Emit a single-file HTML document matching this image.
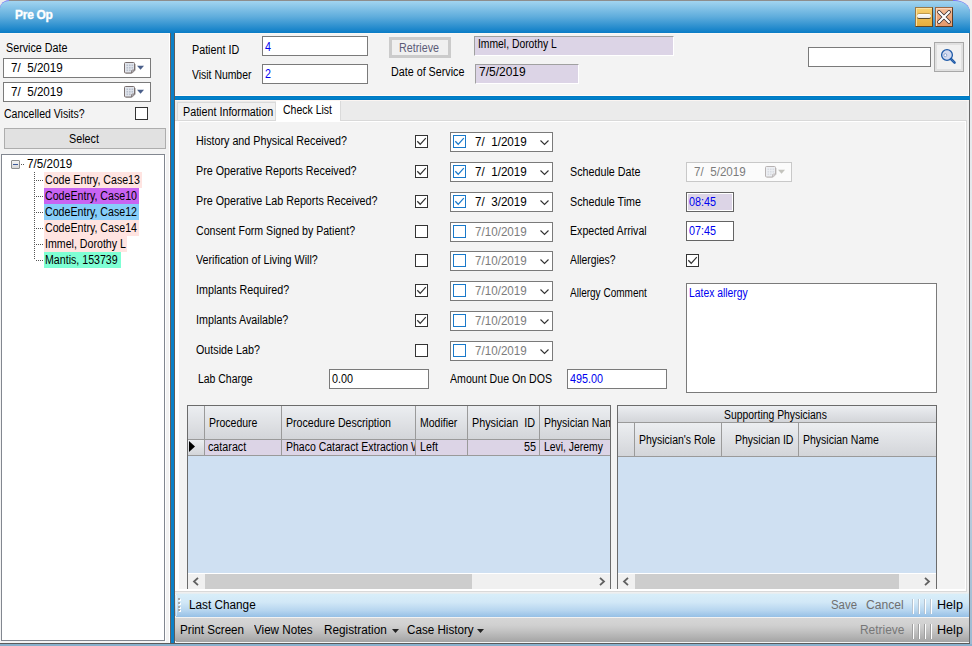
<!DOCTYPE html>
<html><head><meta charset="utf-8"><style>
html,body{margin:0;padding:0;width:972px;height:646px;overflow:hidden;background:#f3f3f3}
body{position:relative;font-family:"Liberation Sans",sans-serif;font-size:12px}
body div{position:absolute;box-sizing:content-box}
.t{white-space:nowrap;line-height:14px;transform-origin:0 0}
</style></head><body>
<div style="left:0;top:0;width:972px;height:646px;background:#f3f3f3"></div>
<div style="left:0px;top:0px;width:21px;height:21px;background:#ececec"></div>
<div style="left:950px;top:0px;width:22px;height:21px;background:#ececec"></div>
<div style="left:970px;top:0px;width:2px;height:646px;background:linear-gradient(#eeeeee,#e0e6ec 45%,#9dbad2)"></div>
<div style="left:0px;top:644px;width:972px;height:2px;background:#88b0cc"></div>
<div style="left:0;top:0;width:970px;height:33px;border-radius:10px 8px 0 0 / 8px 8px 0 0;border-top-right-radius:16px 12px;overflow:hidden;background:#7474f4"><div style="position:absolute;left:0;top:1px;width:970px;height:32px;border-top-left-radius:9px 7px;border-top-right-radius:15px 11px;background:linear-gradient(#a2d4f0,#5eacdc 50%,#0a7cc6)"></div></div>
<div style="left:9px;top:0px;width:944px;height:1px;background:#8d8d8d"></div>
<div style="left:0px;top:33px;width:969px;height:1px;background:#fbf8f4"></div>
<div class="t" style="left:15px;top:8px;font-size:12px;color:#fff;font-weight:bold;letter-spacing:-0.2px;word-spacing:-0.5px;-webkit-text-stroke:0.35px #fff;">Pre Op</div>
<div style="left:915px;top:7px;width:16px;height:18px;border:1px solid;border-color:#9a7a48 #5e4626 #5e4626 #9a7a48;background:linear-gradient(#f8d274,#efbd52 50%,#e6ad3e);box-shadow:inset 1px 1px 0 #fbe2a0"></div>
<div style="left:917px;top:14px;width:14px;height:4px;border-radius:2px;background:linear-gradient(#fff,#e8e8e8);box-shadow:0 1px 0 #5a4a30,0 -0.5px 0 #8a7040"></div>
<div style="left:935px;top:7px;width:16px;height:18px;border:1px solid;border-color:#9a6a48 #5e3e26 #5e3e26 #9a6a48;background:linear-gradient(#f6c29c,#eda77c 50%,#e49a6c);box-shadow:inset 1px 1px 0 #fbd6bc"></div>
<svg style="position:absolute;left:935px;top:8px" width="18" height="18" viewBox="0 0 18 18"><path d="M4 4 L14 14 M14 4 L4 14" stroke="#3a3030" stroke-width="3.8" stroke-linecap="round"/><path d="M4 4 L14 14 M14 4 L4 14" stroke="#fff" stroke-width="2.2" stroke-linecap="round"/></svg>
<div style="left:968px;top:34px;width:1px;height:609px;background:#fff"></div>
<div style="left:969px;top:33px;width:1px;height:611px;background:#6a6a6a"></div>
<div style="left:0px;top:642px;width:969px;height:1px;background:#f4f4f4"></div>
<div style="left:0px;top:643px;width:970px;height:1px;background:#5a5a5a"></div>
<div class="t" style="left:6px;top:41px;font-size:12px;color:#000;transform:scaleX(0.895);">Service Date</div>
<div style="left:3px;top:58px;width:146px;height:18px;border:1px solid #7a7a7a;background:#fff;"></div>
<div class="t" style="left:11px;top:61px;font-size:12px;color:#000;transform:scaleX(0.97);">7/&nbsp;&nbsp;5/2019</div>
<svg style="position:absolute;left:124px;top:62px;" width="21" height="13" viewBox="0 0 21 13"><path d="M2 11.5 h6 l3.5 -3.5 v-6" fill="none" stroke="#c8c8c8" stroke-width="1"/><path d="M1.5 0.5 h8 a1 1 0 0 1 1 1 v6.5 l-3 3 h-6 a1 1 0 0 1 -1 -1 v-8.5 a1 1 0 0 1 1 -1z" fill="#e1e5ec" stroke="#786e6e" stroke-width="1"/><rect x="2.5" y="2.5" width="1.6" height="1.6" fill="#b8bfcc"/><rect x="5.0" y="2.5" width="1.6" height="1.6" fill="#b8bfcc"/><rect x="7.5" y="2.5" width="1.6" height="1.6" fill="#b8bfcc"/><rect x="2.5" y="5.0" width="1.6" height="1.6" fill="#b8bfcc"/><rect x="5.0" y="5.0" width="1.6" height="1.6" fill="#b8bfcc"/><rect x="7.5" y="5.0" width="1.6" height="1.6" fill="#b8bfcc"/><rect x="2.5" y="7.5" width="1.6" height="1.6" fill="#b8bfcc"/><rect x="5.0" y="7.5" width="1.6" height="1.6" fill="#b8bfcc"/><path d="M10.5 8 l-3 3 v-2 a1 1 0 0 1 1 -1z" fill="#c9ced8" stroke="#786e6e" stroke-width=".8"/><path d="M13 3.8 L20 3.8 L16.5 7.8 Z" fill="#4a5f8a"/></svg>
<div style="left:3px;top:82px;width:146px;height:18px;border:1px solid #7a7a7a;background:#fff;"></div>
<div class="t" style="left:11px;top:85px;font-size:12px;color:#000;transform:scaleX(0.97);">7/&nbsp;&nbsp;5/2019</div>
<svg style="position:absolute;left:124px;top:86px;" width="21" height="13" viewBox="0 0 21 13"><path d="M2 11.5 h6 l3.5 -3.5 v-6" fill="none" stroke="#c8c8c8" stroke-width="1"/><path d="M1.5 0.5 h8 a1 1 0 0 1 1 1 v6.5 l-3 3 h-6 a1 1 0 0 1 -1 -1 v-8.5 a1 1 0 0 1 1 -1z" fill="#e1e5ec" stroke="#786e6e" stroke-width="1"/><rect x="2.5" y="2.5" width="1.6" height="1.6" fill="#b8bfcc"/><rect x="5.0" y="2.5" width="1.6" height="1.6" fill="#b8bfcc"/><rect x="7.5" y="2.5" width="1.6" height="1.6" fill="#b8bfcc"/><rect x="2.5" y="5.0" width="1.6" height="1.6" fill="#b8bfcc"/><rect x="5.0" y="5.0" width="1.6" height="1.6" fill="#b8bfcc"/><rect x="7.5" y="5.0" width="1.6" height="1.6" fill="#b8bfcc"/><rect x="2.5" y="7.5" width="1.6" height="1.6" fill="#b8bfcc"/><rect x="5.0" y="7.5" width="1.6" height="1.6" fill="#b8bfcc"/><path d="M10.5 8 l-3 3 v-2 a1 1 0 0 1 1 -1z" fill="#c9ced8" stroke="#786e6e" stroke-width=".8"/><path d="M13 3.8 L20 3.8 L16.5 7.8 Z" fill="#4a5f8a"/></svg>
<div class="t" style="left:4px;top:107px;font-size:12px;color:#000;transform:scaleX(0.878);">Cancelled Visits?</div>
<div style="left:135px;top:107px;width:11px;height:11px;border:1px solid #333;background:#fff"></div>
<div style="left:4px;top:128px;width:160px;height:19px;border:1px solid #adadad;background:#e1e1e1;"></div>
<div class="t" style="left:69px;top:132px;font-size:12px;color:#000;transform:scaleX(0.9);">Select</div>
<div style="left:1px;top:154px;width:162px;height:485px;border:1px solid #828790;background:#fff;"></div>
<div style="left:11px;top:160px;width:7px;height:7px;border:1px solid #8e8f8f;border-radius:1px;background:linear-gradient(#f4f4f4,#d8d8d8)"></div>
<div style="left:13px;top:164px;width:5px;height:1px;background:#3d5a9a"></div>
<div style="left:21px;top:164px;width:4px;height:1px;background:repeating-linear-gradient(90deg,#555 0 1px,transparent 1px 2px)"></div>
<div class="t" style="left:27px;top:157px;font-size:12px;color:#000;transform:scaleX(0.97);">7/5/2019</div>
<div style="left:34px;top:172px;width:1px;height:88px;background:repeating-linear-gradient(#555 0 1px,transparent 1px 2px)"></div>
<div style="left:35px;top:180px;width:9px;height:1px;background:repeating-linear-gradient(90deg,transparent 0 1px,#555 1px 2px)"></div>
<div style="left:44px;top:172px;width:98px;height:16px;background:#ffe4e1"></div>
<div class="t" style="left:45px;top:173px;font-size:12px;color:#000;transform:scaleX(0.886);">Code Entry, Case13</div>
<div style="left:35px;top:196px;width:9px;height:1px;background:repeating-linear-gradient(90deg,transparent 0 1px,#555 1px 2px)"></div>
<div style="left:44px;top:188px;width:95px;height:16px;background:#c864f2"></div>
<div class="t" style="left:45px;top:189px;font-size:12px;color:#000;transform:scaleX(0.886);">CodeEntry, Case10</div>
<div style="left:35px;top:212px;width:9px;height:1px;background:repeating-linear-gradient(90deg,transparent 0 1px,#555 1px 2px)"></div>
<div style="left:44px;top:204px;width:95px;height:16px;background:#87cefa"></div>
<div class="t" style="left:45px;top:205px;font-size:12px;color:#000;transform:scaleX(0.886);">CodeEntry, Case12</div>
<div style="left:35px;top:228px;width:9px;height:1px;background:repeating-linear-gradient(90deg,transparent 0 1px,#555 1px 2px)"></div>
<div style="left:44px;top:220px;width:95px;height:16px;background:#ffe4e1"></div>
<div class="t" style="left:45px;top:221px;font-size:12px;color:#000;transform:scaleX(0.886);">CodeEntry, Case14</div>
<div style="left:35px;top:244px;width:9px;height:1px;background:repeating-linear-gradient(90deg,transparent 0 1px,#555 1px 2px)"></div>
<div style="left:44px;top:236px;width:83px;height:16px;background:#ffe4e1"></div>
<div class="t" style="left:45px;top:237px;font-size:12px;color:#000;transform:scaleX(0.886);">Immel, Dorothy L</div>
<div style="left:35px;top:260px;width:9px;height:1px;background:repeating-linear-gradient(90deg,transparent 0 1px,#555 1px 2px)"></div>
<div style="left:44px;top:252px;width:77px;height:16px;background:#7fffd4"></div>
<div class="t" style="left:45px;top:253px;font-size:12px;color:#000;transform:scaleX(0.886);">Mantis, 153739</div>
<div style="left:165px;top:155px;width:1px;height:487px;background:#fff"></div>
<div style="left:169px;top:34px;width:1px;height:609px;background:#fff"></div>
<div style="left:170px;top:33px;width:1px;height:610px;background:#6a5e5a"></div>
<div style="left:171px;top:33px;width:3px;height:610px;background:#0a80c8"></div>
<div style="left:174px;top:33px;width:1px;height:610px;background:#5a5a5a"></div>
<div class="t" style="left:192px;top:43px;font-size:12px;color:#000;transform:scaleX(0.895);">Patient ID</div>
<div style="left:262px;top:36px;width:104px;height:18px;border:1px solid #7a7a7a;background:#fff;"></div>
<div class="t" style="left:265px;top:40px;font-size:12px;color:#0000f0;transform:scaleX(0.895);">4</div>
<div class="t" style="left:192px;top:68px;font-size:12px;color:#000;transform:scaleX(0.868);">Visit Number</div>
<div style="left:262px;top:64px;width:104px;height:18px;border:1px solid #7a7a7a;background:#fff;"></div>
<div class="t" style="left:265px;top:67px;font-size:12px;color:#0000f0;transform:scaleX(0.895);">2</div>
<div style="left:389px;top:37px;width:56px;height:15px;border:3px solid #cbcbcb;background:#f0f0f0"></div>
<div class="t" style="left:399px;top:41px;font-size:12px;color:#5c5c78;transform:scaleX(0.895);">Retrieve</div>
<div class="t" style="left:391px;top:65px;font-size:12px;color:#000;transform:scaleX(0.895);">Date of Service</div>
<div style="left:474px;top:36px;width:198px;height:18px;border:1px solid;border-color:#a0a0a0 #fff #fff #a0a0a0;background:#dcd4e6"></div>
<div class="t" style="left:478px;top:37px;font-size:12px;color:#000;transform:scaleX(0.862);">Immel, Dorothy L</div>
<div style="left:475px;top:64px;width:102px;height:18px;border:1px solid;border-color:#a0a0a0 #fff #fff #a0a0a0;background:#dcd4e6"></div>
<div class="t" style="left:479px;top:65px;font-size:12px;color:#000;">7/5/2019</div>
<div style="left:808px;top:47px;width:121px;height:18px;border:1px solid #7a7a7a;background:#fff;"></div>
<div style="left:934px;top:42px;width:28px;height:28px;border:1px solid #a8a8a8;background:#f1f1f1;box-shadow:inset 0 0 0 2px #e0e0e0"></div>
<svg style="position:absolute;left:940px;top:48px" width="18" height="18" viewBox="0 0 18 18"><circle cx="7" cy="7" r="5.4" fill="#d3daef" stroke="#1f5ba8" stroke-width="1.3"/><circle cx="5.3" cy="7.2" r="1.5" fill="#fff" stroke="#7f9ccc" stroke-width=".9"/><path d="M11 11 L14.6 14.6" stroke="#1f5ba8" stroke-width="2.5" stroke-linecap="round"/><path d="M11.3 11.3 L14.3 14.3" stroke="#5a86c0" stroke-width=".6"/></svg>
<div style="left:175px;top:95px;width:794px;height:1px;background:#fffcf8"></div>
<div style="left:175px;top:96px;width:795px;height:4px;background:linear-gradient(#0076c2,#0082c9 40%,#0080c8 60%,#0076c2)"></div>
<div style="left:175px;top:100px;width:794px;height:21px;background:#ebebeb"></div>
<div style="left:175px;top:100px;width:794px;height:1px;background:#fbf5f2"></div>
<div style="left:177px;top:102px;width:97px;height:18px;border:1px solid #dadada;border-bottom:none;background:#f0f0f0"></div>
<div class="t" style="left:183px;top:105px;font-size:12px;color:#000;transform:scaleX(0.895);">Patient Information</div>
<div style="left:175px;top:120px;width:792px;height:472px;background:#d9d9d9"></div>
<div style="left:175px;top:121px;width:791px;height:470px;background:#fff"></div>
<div style="left:967px;top:101px;width:2px;height:492px;background:#f0f0f0"></div>
<div style="left:175px;top:592px;width:794px;height:1px;background:#efefef"></div>
<div style="left:276px;top:101px;width:64px;height:21px;background:#fff"></div>
<div style="left:340px;top:101px;width:1px;height:20px;background:#dadada"></div>
<div class="t" style="left:283px;top:103px;font-size:12px;color:#000;transform:scaleX(0.875);">Check List</div>
<div style="left:179px;top:122px;width:786px;height:467px;background:#f3f3f3"></div>
<div class="t" style="left:196px;top:134px;font-size:12px;color:#000;transform:scaleX(0.895);">History and Physical Received?</div>
<div style="left:415px;top:135px;width:11px;height:11px;border:1px solid #333;background:#fff"></div>
<svg style="position:absolute;left:415px;top:135px" width="13" height="13" viewBox="0 0 13 13"><path d="M2.3 6.3 L5.2 9.3 L10.8 3.2" fill="none" stroke="#333" stroke-width="1.25"/></svg>
<div style="left:450px;top:132px;width:101px;height:18px;border:1px solid #7a7a7a;background:#fff;"></div>
<div style="left:453px;top:135px;width:11px;height:11px;border:1px solid #1979ca;background:#fff"></div>
<svg style="position:absolute;left:453px;top:135px" width="13" height="13" viewBox="0 0 13 13"><path d="M2.3 6.3 L5.2 9.3 L10.8 3.2" fill="none" stroke="#1979ca" stroke-width="1.25"/></svg>
<div class="t" style="left:475px;top:135px;font-size:12px;color:#000;transform:scaleX(0.97);">7/&nbsp;&nbsp;1/2019</div>
<svg style="position:absolute;left:540px;top:140px" width="9" height="6" viewBox="0 0 9 6"><path d="M0.5 0.5 L4.5 4.5 L8.5 0.5" fill="none" stroke="#333" stroke-width="1.1"/></svg>
<div class="t" style="left:196px;top:164px;font-size:12px;color:#000;transform:scaleX(0.895);">Pre Operative Reports Received?</div>
<div style="left:415px;top:165px;width:11px;height:11px;border:1px solid #333;background:#fff"></div>
<svg style="position:absolute;left:415px;top:165px" width="13" height="13" viewBox="0 0 13 13"><path d="M2.3 6.3 L5.2 9.3 L10.8 3.2" fill="none" stroke="#333" stroke-width="1.25"/></svg>
<div style="left:450px;top:162px;width:101px;height:18px;border:1px solid #7a7a7a;background:#fff;"></div>
<div style="left:453px;top:165px;width:11px;height:11px;border:1px solid #1979ca;background:#fff"></div>
<svg style="position:absolute;left:453px;top:165px" width="13" height="13" viewBox="0 0 13 13"><path d="M2.3 6.3 L5.2 9.3 L10.8 3.2" fill="none" stroke="#1979ca" stroke-width="1.25"/></svg>
<div class="t" style="left:475px;top:165px;font-size:12px;color:#000;transform:scaleX(0.97);">7/&nbsp;&nbsp;1/2019</div>
<svg style="position:absolute;left:540px;top:170px" width="9" height="6" viewBox="0 0 9 6"><path d="M0.5 0.5 L4.5 4.5 L8.5 0.5" fill="none" stroke="#333" stroke-width="1.1"/></svg>
<div class="t" style="left:196px;top:194px;font-size:12px;color:#000;transform:scaleX(0.895);">Pre Operative Lab Reports Received?</div>
<div style="left:415px;top:195px;width:11px;height:11px;border:1px solid #333;background:#fff"></div>
<svg style="position:absolute;left:415px;top:195px" width="13" height="13" viewBox="0 0 13 13"><path d="M2.3 6.3 L5.2 9.3 L10.8 3.2" fill="none" stroke="#333" stroke-width="1.25"/></svg>
<div style="left:450px;top:192px;width:101px;height:18px;border:1px solid #7a7a7a;background:#fff;"></div>
<div style="left:453px;top:195px;width:11px;height:11px;border:1px solid #1979ca;background:#fff"></div>
<svg style="position:absolute;left:453px;top:195px" width="13" height="13" viewBox="0 0 13 13"><path d="M2.3 6.3 L5.2 9.3 L10.8 3.2" fill="none" stroke="#1979ca" stroke-width="1.25"/></svg>
<div class="t" style="left:475px;top:195px;font-size:12px;color:#000;transform:scaleX(0.97);">7/&nbsp;&nbsp;3/2019</div>
<svg style="position:absolute;left:540px;top:200px" width="9" height="6" viewBox="0 0 9 6"><path d="M0.5 0.5 L4.5 4.5 L8.5 0.5" fill="none" stroke="#333" stroke-width="1.1"/></svg>
<div class="t" style="left:196px;top:224px;font-size:12px;color:#000;transform:scaleX(0.883);">Consent Form Signed by Patient?</div>
<div style="left:415px;top:225px;width:11px;height:11px;border:1px solid #333;background:#fff"></div>
<div style="left:450px;top:222px;width:101px;height:18px;border:1px solid #7a7a7a;background:#fff;"></div>
<div style="left:453px;top:225px;width:11px;height:11px;border:1px solid #1979ca;background:#fff"></div>
<div class="t" style="left:475px;top:225px;font-size:12px;color:#7c7c7c;transform:scaleX(0.97);">7/10/2019</div>
<svg style="position:absolute;left:540px;top:230px" width="9" height="6" viewBox="0 0 9 6"><path d="M0.5 0.5 L4.5 4.5 L8.5 0.5" fill="none" stroke="#333" stroke-width="1.1"/></svg>
<div class="t" style="left:196px;top:253px;font-size:12px;color:#000;transform:scaleX(0.895);">Verification of Living Will?</div>
<div style="left:415px;top:254px;width:11px;height:11px;border:1px solid #333;background:#fff"></div>
<div style="left:450px;top:251px;width:101px;height:18px;border:1px solid #7a7a7a;background:#fff;"></div>
<div style="left:453px;top:254px;width:11px;height:11px;border:1px solid #1979ca;background:#fff"></div>
<div class="t" style="left:475px;top:254px;font-size:12px;color:#7c7c7c;transform:scaleX(0.97);">7/10/2019</div>
<svg style="position:absolute;left:540px;top:259px" width="9" height="6" viewBox="0 0 9 6"><path d="M0.5 0.5 L4.5 4.5 L8.5 0.5" fill="none" stroke="#333" stroke-width="1.1"/></svg>
<div class="t" style="left:196px;top:283px;font-size:12px;color:#000;transform:scaleX(0.895);">Implants Required?</div>
<div style="left:415px;top:284px;width:11px;height:11px;border:1px solid #333;background:#fff"></div>
<svg style="position:absolute;left:415px;top:284px" width="13" height="13" viewBox="0 0 13 13"><path d="M2.3 6.3 L5.2 9.3 L10.8 3.2" fill="none" stroke="#333" stroke-width="1.25"/></svg>
<div style="left:450px;top:281px;width:101px;height:18px;border:1px solid #7a7a7a;background:#fff;"></div>
<div style="left:453px;top:284px;width:11px;height:11px;border:1px solid #1979ca;background:#fff"></div>
<div class="t" style="left:475px;top:284px;font-size:12px;color:#7c7c7c;transform:scaleX(0.97);">7/10/2019</div>
<svg style="position:absolute;left:540px;top:289px" width="9" height="6" viewBox="0 0 9 6"><path d="M0.5 0.5 L4.5 4.5 L8.5 0.5" fill="none" stroke="#333" stroke-width="1.1"/></svg>
<div class="t" style="left:196px;top:313px;font-size:12px;color:#000;transform:scaleX(0.895);">Implants Available?</div>
<div style="left:415px;top:314px;width:11px;height:11px;border:1px solid #333;background:#fff"></div>
<svg style="position:absolute;left:415px;top:314px" width="13" height="13" viewBox="0 0 13 13"><path d="M2.3 6.3 L5.2 9.3 L10.8 3.2" fill="none" stroke="#333" stroke-width="1.25"/></svg>
<div style="left:450px;top:311px;width:101px;height:18px;border:1px solid #7a7a7a;background:#fff;"></div>
<div style="left:453px;top:314px;width:11px;height:11px;border:1px solid #1979ca;background:#fff"></div>
<div class="t" style="left:475px;top:314px;font-size:12px;color:#7c7c7c;transform:scaleX(0.97);">7/10/2019</div>
<svg style="position:absolute;left:540px;top:319px" width="9" height="6" viewBox="0 0 9 6"><path d="M0.5 0.5 L4.5 4.5 L8.5 0.5" fill="none" stroke="#333" stroke-width="1.1"/></svg>
<div class="t" style="left:196px;top:343px;font-size:12px;color:#000;transform:scaleX(0.895);">Outside Lab?</div>
<div style="left:415px;top:344px;width:11px;height:11px;border:1px solid #333;background:#fff"></div>
<div style="left:450px;top:341px;width:101px;height:18px;border:1px solid #7a7a7a;background:#fff;"></div>
<div style="left:453px;top:344px;width:11px;height:11px;border:1px solid #1979ca;background:#fff"></div>
<div class="t" style="left:475px;top:344px;font-size:12px;color:#7c7c7c;transform:scaleX(0.97);">7/10/2019</div>
<svg style="position:absolute;left:540px;top:349px" width="9" height="6" viewBox="0 0 9 6"><path d="M0.5 0.5 L4.5 4.5 L8.5 0.5" fill="none" stroke="#333" stroke-width="1.1"/></svg>
<div class="t" style="left:198px;top:372px;font-size:12px;color:#000;transform:scaleX(0.87);">Lab Charge</div>
<div style="left:329px;top:369px;width:98px;height:18px;border:1px solid #7a7a7a;background:#fff;"></div>
<div class="t" style="left:332px;top:372px;font-size:12px;color:#000;transform:scaleX(0.9);">0.00</div>
<div class="t" style="left:450px;top:372px;font-size:12px;color:#000;transform:scaleX(0.885);">Amount Due On DOS</div>
<div style="left:567px;top:369px;width:98px;height:18px;border:1px solid #7a7a7a;background:#fff;"></div>
<div class="t" style="left:570px;top:372px;font-size:12px;color:#0000f0;transform:scaleX(0.9);">495.00</div>
<div class="t" style="left:570px;top:165px;font-size:12px;color:#000;transform:scaleX(0.895);">Schedule Date</div>
<div style="left:686px;top:162px;width:104px;height:18px;border:1px solid #c8c8c8;background:#fbfbfb;"></div>
<div class="t" style="left:694px;top:165px;font-size:12px;color:#7c7c7c;transform:scaleX(0.97);">7/&nbsp;&nbsp;5/2019</div>
<svg style="position:absolute;left:765px;top:166px;opacity:.5;" width="21" height="13" viewBox="0 0 21 13"><path d="M2 11.5 h6 l3.5 -3.5 v-6" fill="none" stroke="#c8c8c8" stroke-width="1"/><path d="M1.5 0.5 h8 a1 1 0 0 1 1 1 v6.5 l-3 3 h-6 a1 1 0 0 1 -1 -1 v-8.5 a1 1 0 0 1 1 -1z" fill="#e1e5ec" stroke="#786e6e" stroke-width="1"/><rect x="2.5" y="2.5" width="1.6" height="1.6" fill="#b8bfcc"/><rect x="5.0" y="2.5" width="1.6" height="1.6" fill="#b8bfcc"/><rect x="7.5" y="2.5" width="1.6" height="1.6" fill="#b8bfcc"/><rect x="2.5" y="5.0" width="1.6" height="1.6" fill="#b8bfcc"/><rect x="5.0" y="5.0" width="1.6" height="1.6" fill="#b8bfcc"/><rect x="7.5" y="5.0" width="1.6" height="1.6" fill="#b8bfcc"/><rect x="2.5" y="7.5" width="1.6" height="1.6" fill="#b8bfcc"/><rect x="5.0" y="7.5" width="1.6" height="1.6" fill="#b8bfcc"/><path d="M10.5 8 l-3 3 v-2 a1 1 0 0 1 1 -1z" fill="#c9ced8" stroke="#786e6e" stroke-width=".8"/><path d="M13 3.8 L20 3.8 L16.5 7.8 Z" fill="#8c8c80"/></svg>
<div class="t" style="left:570px;top:195px;font-size:12px;color:#000;transform:scaleX(0.895);">Schedule Time</div>
<div style="left:686px;top:192px;width:46px;height:18px;border:1px solid #646464;background:#dcd4e6;box-shadow:inset 0 0 0 1px #fff"></div>
<div class="t" style="left:689px;top:195px;font-size:12px;color:#0000f0;transform:scaleX(0.9);">08:45</div>
<div class="t" style="left:570px;top:224px;font-size:12px;color:#000;transform:scaleX(0.884);">Expected Arrival</div>
<div style="left:686px;top:221px;width:46px;height:18px;border:1px solid #646464;background:#fff;"></div>
<div class="t" style="left:689px;top:224px;font-size:12px;color:#0000f0;transform:scaleX(0.9);">07:45</div>
<div class="t" style="left:570px;top:253px;font-size:12px;color:#000;transform:scaleX(0.865);">Allergies?</div>
<div style="left:686px;top:254px;width:11px;height:11px;border:1px solid #333;background:#fff"></div>
<svg style="position:absolute;left:686px;top:254px" width="13" height="13" viewBox="0 0 13 13"><path d="M2.3 6.3 L5.2 9.3 L10.8 3.2" fill="none" stroke="#333" stroke-width="1.25"/></svg>
<div class="t" style="left:570px;top:286px;font-size:12px;color:#000;transform:scaleX(0.835);">Allergy Comment</div>
<div style="left:686px;top:283px;width:249px;height:108px;border:1px solid #7a7a7a;background:#fff;"></div>
<div class="t" style="left:689px;top:286px;font-size:12px;color:#0000f0;transform:scaleX(0.862);">Latex allergy</div>
<div style="left:187px;top:405px;width:422px;height:183px;border:1px solid #6b6b6b;border-bottom:none;background:#cfe0f2;overflow:hidden"></div>
<div style="left:188px;top:406px;width:422px;height:33px;background:linear-gradient(#eceef1,#d3d5d9)"></div>
<div style="left:188px;top:439px;width:422px;height:1px;background:#9a9a9a"></div>
<div style="left:188px;top:440px;width:17px;height:15px;background:linear-gradient(#eceef1,#d3d5d9)"></div>
<div style="left:205px;top:440px;width:405px;height:15px;background:#dcd4e6"></div>
<div style="left:188px;top:455px;width:422px;height:1px;background:#9a9a9a"></div>
<div style="left:204px;top:406px;width:1px;height:50px;background:#9a9a9a"></div>
<div style="left:281px;top:406px;width:1px;height:50px;background:#9a9a9a"></div>
<div style="left:415px;top:406px;width:1px;height:50px;background:#9a9a9a"></div>
<div style="left:467px;top:406px;width:1px;height:50px;background:#9a9a9a"></div>
<div style="left:539px;top:406px;width:1px;height:50px;background:#9a9a9a"></div>
<svg style="position:absolute;left:189px;top:441px" width="7" height="12" viewBox="0 0 7 12"><path d="M0 0 L6 5.5 L0 11 Z" fill="#000"/></svg>
<div class="t" style="left:209px;top:416px;font-size:12px;color:#000;transform:scaleX(0.875);">Procedure</div>
<div class="t" style="left:286px;top:416px;font-size:12px;color:#000;transform:scaleX(0.884);">Procedure Description</div>
<div class="t" style="left:420px;top:416px;font-size:12px;color:#000;transform:scaleX(0.875);">Modifier</div>
<div style="left:472px;top:416px;width:67px;height:14px;overflow:hidden"><div class="t" style="left:0;top:0;transform:scaleX(.9)">Physician&nbsp;&nbsp;ID</div></div>
<div style="left:544px;top:416px;width:66px;height:14px;overflow:hidden"><div class="t" style="left:0;top:0;transform:scaleX(.875)">Physician Name</div></div>
<div class="t" style="left:208px;top:440px;font-size:12px;color:#000;transform:scaleX(0.895);">cataract</div>
<div style="left:286px;top:440px;width:129px;height:15px;overflow:hidden"><div class="t" style="left:0;top:0;transform:scaleX(.875)">Phaco Cataract Extraction W</div></div>
<div class="t" style="left:420px;top:440px;font-size:12px;color:#000;transform:scaleX(0.895);">Left</div>
<div class="t" style="left:524px;top:440px;font-size:12px;color:#000;transform:scaleX(0.9);">55</div>
<div class="t" style="left:544px;top:440px;font-size:12px;color:#000;transform:scaleX(0.866);">Levi, Jeremy</div>
<div style="left:188px;top:573px;width:422px;height:1px;background:#fff"></div>
<div style="left:188px;top:574px;width:422px;height:15px;background:#f0f0f0"></div>
<div style="left:205px;top:574px;width:267px;height:15px;background:#cdcdcd"></div>
<svg style="position:absolute;left:192px;top:577px" width="8" height="9" viewBox="0 0 8 9"><path d="M6 0.8 L2 4.5 L6 8.2" fill="none" stroke="#606060" stroke-width="1.8"/></svg>
<svg style="position:absolute;left:598px;top:577px" width="8" height="9" viewBox="0 0 8 9"><path d="M2 0.8 L6 4.5 L2 8.2" fill="none" stroke="#606060" stroke-width="1.8"/></svg>
<div style="left:617px;top:405px;width:318px;height:183px;border:1px solid #6b6b6b;border-bottom:none;background:#cfe0f2"></div>
<div style="left:618px;top:406px;width:318px;height:16px;background:linear-gradient(#eceef1,#d3d5d9)"></div>
<div style="left:618px;top:422px;width:318px;height:1px;background:#9a9a9a"></div>
<div style="left:618px;top:423px;width:318px;height:33px;background:linear-gradient(#eceef1,#d3d5d9)"></div>
<div style="left:618px;top:456px;width:318px;height:1px;background:#9a9a9a"></div>
<div style="left:634px;top:423px;width:1px;height:34px;background:#9a9a9a"></div>
<div style="left:721px;top:423px;width:1px;height:34px;background:#9a9a9a"></div>
<div style="left:798px;top:423px;width:1px;height:34px;background:#9a9a9a"></div>
<div class="t" style="left:724px;top:408px;font-size:12px;color:#000;transform:scaleX(0.866);">Supporting Physicians</div>
<div class="t" style="left:639px;top:433px;font-size:12px;color:#000;transform:scaleX(0.872);">Physician's Role</div>
<div class="t" style="left:735px;top:433px;font-size:12px;color:#000;transform:scaleX(0.876);">Physician ID</div>
<div class="t" style="left:803px;top:433px;font-size:12px;color:#000;transform:scaleX(0.875);">Physician Name</div>
<div style="left:618px;top:573px;width:318px;height:1px;background:#fff"></div>
<div style="left:618px;top:574px;width:318px;height:15px;background:#f0f0f0"></div>
<div style="left:635px;top:574px;width:264px;height:15px;background:#cdcdcd"></div>
<svg style="position:absolute;left:622px;top:577px" width="8" height="9" viewBox="0 0 8 9"><path d="M6 0.8 L2 4.5 L6 8.2" fill="none" stroke="#606060" stroke-width="1.8"/></svg>
<svg style="position:absolute;left:923px;top:577px" width="8" height="9" viewBox="0 0 8 9"><path d="M2 0.8 L6 4.5 L2 8.2" fill="none" stroke="#606060" stroke-width="1.8"/></svg>
<div style="left:175px;top:593px;width:794px;height:1px;background:#e6eef2"></div>
<div style="left:175px;top:594px;width:794px;height:23px;background:linear-gradient(#d8eef9,#d2e8f7 35%,#b6d5ef 72%,#96c0e6)"></div>
<div style="left:175px;top:617px;width:794px;height:1px;background:#f2f2f2"></div>
<div style="left:175px;top:594px;width:1px;height:1px;background:#f4f8fa"></div>
<div style="left:175px;top:616px;width:1px;height:1px;background:#eef2f6"></div>
<div style="left:176px;top:595px;width:1px;height:21px;background:rgba(255,255,255,.5)"></div>
<div style="left:179px;top:599px;width:2px;height:2px;background:#fff"></div>
<div style="left:178px;top:598px;width:2px;height:2px;background:#a8a8a8"></div>
<div style="left:179px;top:603px;width:2px;height:2px;background:#fff"></div>
<div style="left:178px;top:602px;width:2px;height:2px;background:#a8a8a8"></div>
<div style="left:179px;top:607px;width:2px;height:2px;background:#fff"></div>
<div style="left:178px;top:606px;width:2px;height:2px;background:#a8a8a8"></div>
<div style="left:179px;top:610px;width:2px;height:2px;background:#fff"></div>
<div style="left:178px;top:609px;width:2px;height:2px;background:#a8a8a8"></div>
<div class="t" style="left:189px;top:598px;font-size:12px;color:#000;transform:scaleX(0.98);">Last Change</div>
<div class="t" style="left:831px;top:598px;font-size:12px;color:#6f6f6f;transform:scaleX(0.95);">Save</div>
<div class="t" style="left:866px;top:598px;font-size:12px;color:#6f6f6f;transform:scaleX(1.01);">Cancel</div>
<div style="left:912px;top:599px;width:1px;height:15px;background:#b7c4d0"></div>
<div style="left:913px;top:599px;width:1px;height:15px;background:#fff"></div>
<div style="left:918px;top:599px;width:1px;height:15px;background:#b7c4d0"></div>
<div style="left:919px;top:599px;width:1px;height:15px;background:#fff"></div>
<div style="left:924px;top:599px;width:1px;height:15px;background:#b7c4d0"></div>
<div style="left:925px;top:599px;width:1px;height:15px;background:#fff"></div>
<div style="left:930px;top:599px;width:1px;height:15px;background:#b7c4d0"></div>
<div style="left:931px;top:599px;width:1px;height:15px;background:#fff"></div>
<div class="t" style="left:937px;top:598px;font-size:12px;color:#000;transform:scaleX(1.05);">Help</div>
<div style="left:175px;top:618px;width:794px;height:24px;background:linear-gradient(#d6d6d6,#d0d0d0 30%,#c4c4c4 52%,#a4a4a4)"></div>
<div class="t" style="left:180px;top:623px;font-size:12px;color:#000;transform:scaleX(0.97);">Print Screen</div>
<div class="t" style="left:254px;top:623px;font-size:12px;color:#000;transform:scaleX(0.97);">View Notes</div>
<div class="t" style="left:324px;top:623px;font-size:12px;color:#000;transform:scaleX(0.98);">Registration</div>
<svg style="position:absolute;left:392px;top:629px" width="7" height="4" viewBox="0 0 7 4"><path d="M0 0 L7 0 L3.5 4Z" fill="#222"/></svg>
<div class="t" style="left:407px;top:623px;font-size:12px;color:#000;transform:scaleX(0.97);">Case History</div>
<svg style="position:absolute;left:477px;top:629px" width="7" height="4" viewBox="0 0 7 4"><path d="M0 0 L7 0 L3.5 4Z" fill="#222"/></svg>
<div class="t" style="left:860px;top:623px;font-size:12px;color:#777;transform:scaleX(0.995);">Retrieve</div>
<div style="left:912px;top:624px;width:1px;height:15px;background:#a0a0a0"></div>
<div style="left:913px;top:624px;width:1px;height:15px;background:#fff"></div>
<div style="left:918px;top:624px;width:1px;height:15px;background:#a0a0a0"></div>
<div style="left:919px;top:624px;width:1px;height:15px;background:#fff"></div>
<div style="left:924px;top:624px;width:1px;height:15px;background:#a0a0a0"></div>
<div style="left:925px;top:624px;width:1px;height:15px;background:#fff"></div>
<div style="left:930px;top:624px;width:1px;height:15px;background:#a0a0a0"></div>
<div style="left:931px;top:624px;width:1px;height:15px;background:#fff"></div>
<div class="t" style="left:937px;top:623px;font-size:12px;color:#000;transform:scaleX(1.05);">Help</div>
<div style="left:175px;top:641px;width:1px;height:1px;background:#f4f4f4"></div>
</body></html>
